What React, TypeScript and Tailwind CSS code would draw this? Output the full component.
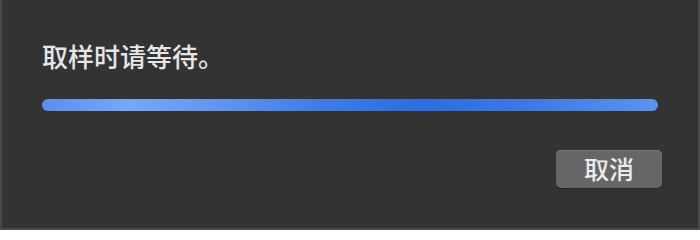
export default function App() {
  return (
    <div className="h-[230px] w-[700px] bg-[#2d2d2d]">
      <div
        className="flex h-full w-full flex-col border-x-2 border-b-2 border-[#4a4a4a] bg-[#333333] px-[40px] pt-[41px]"
        style={{ fontFamily: '"Noto Sans CJK SC", "Noto Sans", sans-serif' }}
      >
        <p className="text-[26px] leading-[30px] font-medium text-[#e6e6e6]">取样时请等待。</p>
        <div className="mt-[28px] h-[12px] w-[616px] rounded-full bg-[linear-gradient(90deg,#5a8ef0_0%,#78a7f8_14%,#5f93ef_30%,#3f7ce6_45%,#2e6ce0_62%,#3c78e4_78%,#5b93ef_100%)]" />
        <div className="mt-[39px] flex justify-end">
          <button className="-mr-[4px] flex h-[38px] w-[106px] items-center justify-center rounded-[5px] bg-[#666666] text-[25px] font-medium text-[#ececec] shadow-[inset_0_1px_0_#787878,0_1px_1px_rgba(0,0,0,0.3)]">
            取消
          </button>
        </div>
      </div>
    </div>
  )
}
